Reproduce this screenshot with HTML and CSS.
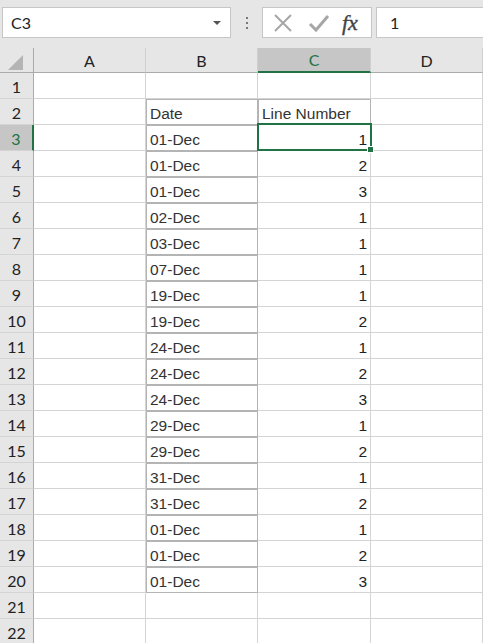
FILE: index.html
```html
<!DOCTYPE html>
<html lang="en">
<head>
    <meta charset="UTF-8">
    <meta name="viewport" content="width=device-width, initial-scale=1.0">
    <title>Sheet</title>
    <link rel="stylesheet" href="styles.css">
</head>
<body>
    <div class="toolbar">
        <div class="namebox">
            <span>C3</span>
            <span class="caret"></span>
        </div>
        <div class="grip"><i></i><i></i><i></i></div>
        <div class="fxbox">
            <svg class="ico" width="22" height="22" viewBox="0 0 22 22"><path d="M3 3 L19 19 M19 3 L3 19" stroke="#a6a6a6" stroke-width="2" fill="none"/></svg>
            <svg class="ico" width="22" height="22" viewBox="0 0 22 22"><path d="M2 12 L8 18 L20 4" stroke="#a6a6a6" stroke-width="3" fill="none"/></svg>
            <span class="fx">fx</span>
        </div>
        <div class="formula">1</div>
    </div>

    <div class="sheet">
        <div class="row head">
            <div class="cell corner"><span class="tri"></span></div>
            <div class="cell col">A</div>
            <div class="cell col">B</div>
            <div class="cell col sel">C</div>
            <div class="cell col">D</div>
        </div>
        <div class="row">
            <div class="cell num">1</div>
            <div class="cell"></div><div class="cell"></div><div class="cell"></div><div class="cell"></div>
        </div>
        <div class="row">
            <div class="cell num">2</div>
            <div class="cell"></div>
            <div class="cell boxed">Date</div>
            <div class="cell boxed">Line Number</div>
            <div class="cell"></div>
        </div>
        <div class="row">
            <div class="cell num sel">3</div>
            <div class="cell"></div>
            <div class="cell boxed">01-Dec</div>
            <div class="cell val active">1</div>
            <div class="cell"></div>
        </div>
        <div class="row"><div class="cell num">4</div><div class="cell"></div><div class="cell boxed">01-Dec</div><div class="cell val">2</div><div class="cell"></div></div>
        <div class="row"><div class="cell num">5</div><div class="cell"></div><div class="cell boxed">01-Dec</div><div class="cell val">3</div><div class="cell"></div></div>
        <div class="row"><div class="cell num">6</div><div class="cell"></div><div class="cell boxed">02-Dec</div><div class="cell val">1</div><div class="cell"></div></div>
        <div class="row"><div class="cell num">7</div><div class="cell"></div><div class="cell boxed">03-Dec</div><div class="cell val">1</div><div class="cell"></div></div>
        <div class="row"><div class="cell num">8</div><div class="cell"></div><div class="cell boxed">07-Dec</div><div class="cell val">1</div><div class="cell"></div></div>
        <div class="row"><div class="cell num">9</div><div class="cell"></div><div class="cell boxed">19-Dec</div><div class="cell val">1</div><div class="cell"></div></div>
        <div class="row"><div class="cell num">10</div><div class="cell"></div><div class="cell boxed">19-Dec</div><div class="cell val">2</div><div class="cell"></div></div>
        <div class="row"><div class="cell num">11</div><div class="cell"></div><div class="cell boxed">24-Dec</div><div class="cell val">1</div><div class="cell"></div></div>
        <div class="row"><div class="cell num">12</div><div class="cell"></div><div class="cell boxed">24-Dec</div><div class="cell val">2</div><div class="cell"></div></div>
        <div class="row"><div class="cell num">13</div><div class="cell"></div><div class="cell boxed">24-Dec</div><div class="cell val">3</div><div class="cell"></div></div>
        <div class="row"><div class="cell num">14</div><div class="cell"></div><div class="cell boxed">29-Dec</div><div class="cell val">1</div><div class="cell"></div></div>
        <div class="row"><div class="cell num">15</div><div class="cell"></div><div class="cell boxed">29-Dec</div><div class="cell val">2</div><div class="cell"></div></div>
        <div class="row"><div class="cell num">16</div><div class="cell"></div><div class="cell boxed">31-Dec</div><div class="cell val">1</div><div class="cell"></div></div>
        <div class="row"><div class="cell num">17</div><div class="cell"></div><div class="cell boxed">31-Dec</div><div class="cell val">2</div><div class="cell"></div></div>
        <div class="row"><div class="cell num">18</div><div class="cell"></div><div class="cell boxed">01-Dec</div><div class="cell val">1</div><div class="cell"></div></div>
        <div class="row"><div class="cell num">19</div><div class="cell"></div><div class="cell boxed">01-Dec</div><div class="cell val">2</div><div class="cell"></div></div>
        <div class="row"><div class="cell num">20</div><div class="cell"></div><div class="cell boxed">01-Dec</div><div class="cell val">3</div><div class="cell"></div></div>
        <div class="row">
            <div class="cell num">21</div>
            <div class="cell"></div><div class="cell"></div><div class="cell"></div><div class="cell"></div>
        </div>
        <div class="row">
            <div class="cell num">22</div>
            <div class="cell"></div><div class="cell"></div><div class="cell"></div><div class="cell"></div>
        </div>
    </div>
</body>
</html>
```

FILE: styles.css
```css
body {
    margin: 0;
    background: #fff;
    font-family: "Liberation Sans", Arial, sans-serif;
    color: #222;
    overflow: hidden;
}
.toolbar {
    height: 48px;
    background: #e6e6e6;
    display: flex;
    align-items: flex-start;
    padding-top: 7px;
    box-sizing: border-box;
}
.namebox {
    margin-left: 2px;
    width: 229px;
    height: 31px;
    background: #fff;
    border: 1px solid #c6c6c6;
    box-sizing: border-box;
    display: flex;
    align-items: center;
    justify-content: space-between;
    padding: 0 8px 0 8px;
    font-family: Lato, "Open Sans", sans-serif;
    font-size: 16px;
}
.caret {
    width: 0;
    height: 0;
    border-left: 4px solid transparent;
    border-right: 4px solid transparent;
    border-top: 4px solid #555;
    margin-right: 1px;
}
.grip {
    width: 31px;
    height: 31px;
    display: flex;
    flex-direction: column;
    align-items: center;
    justify-content: center;
    gap: 3px;
}
.grip i {
    width: 2px;
    height: 2px;
    background: #777;
}
.fxbox {
    width: 110px;
    height: 31px;
    background: #fff;
    border: 1px solid #c6c6c6;
    box-sizing: border-box;
    display: flex;
    align-items: center;
    padding-left: 9px;
}
.ico {
    margin-right: 14px;
}
.fx {
    font-family: "Liberation Serif", serif;
    font-style: italic;
    font-size: 22px;
    color: #444;
    margin-left: -2px;
    -webkit-text-stroke: 0.4px #444;
}
.formula {
    margin-left: 4px;
    flex: 1;
    height: 31px;
    background: #fff;
    border: 1px solid #c6c6c6;
    border-right: none;
    box-sizing: border-box;
    display: flex;
    align-items: center;
    padding-left: 13px;
    font-family: Lato, "Open Sans", sans-serif;
    font-size: 16px;
}
.row {
    display: grid;
    grid-template-columns: 34px 112px 112px 113px 1fr;
    height: 26px;
}
.row.head {
    height: 25px;
}
.cell {
    box-sizing: border-box;
    border-right: 1px solid #d4d4d4;
    border-bottom: 1px solid #d4d4d4;
    font-size: 15.5px;
    display: flex;
    align-items: flex-end;
    padding: 0 4px 1px 4px;
    white-space: nowrap;
    position: relative;
}
.head .cell {
    background: #e6e6e6;
    border-right: 1px solid #cfcfcf;
    border-bottom: 1px solid #ababab;
    justify-content: center;
    align-items: center;
    padding: 0;
    font-family: Lato, "Open Sans", sans-serif;
    font-size: 16px;
    color: #222;
}
.head .corner {
    border-right: 1px solid #ababab;
}
.tri {
    width: 0;
    height: 0;
    border-left: 15px solid transparent;
    border-bottom: 15px solid #b4b4b4;
    margin: 4px 0 0 -2px;
}
.head .sel {
    background: #c6c6c6;
    color: #217346;
    border-bottom: 2px solid #217346;
}
.num {
    background: #e6e6e6;
    border-right: 1px solid #ababab;
    border-bottom: 1px solid #d4d4d4;
    justify-content: center;
    align-items: center;
    padding: 1px 0 0 0;
    font-family: Lato, "Open Sans", sans-serif;
    font-size: 16px;
}
.num.sel {
    background: #c6c6c6;
    color: #217346;
    border-right: 2px solid #217346;
}
.boxed {
    border-right-color: #b4b4b4;
    border-bottom-color: #b4b4b4;
    box-shadow: inset 1px 1px 0 #b4b4b4;
    color: #333;
}
.val {
    justify-content: flex-end;
    padding-right: 3px;
}
.active::after {
    content: "";
    position: absolute;
    top: -2px;
    left: -1px;
    right: -2px;
    bottom: -1px;
    border: 2px solid #217346;
}
.active::before {
    content: "";
    position: absolute;
    right: -4px;
    bottom: -3px;
    width: 5px;
    height: 5px;
    background: #217346;
    border: 1px solid #fff;
    z-index: 2;
}
```
